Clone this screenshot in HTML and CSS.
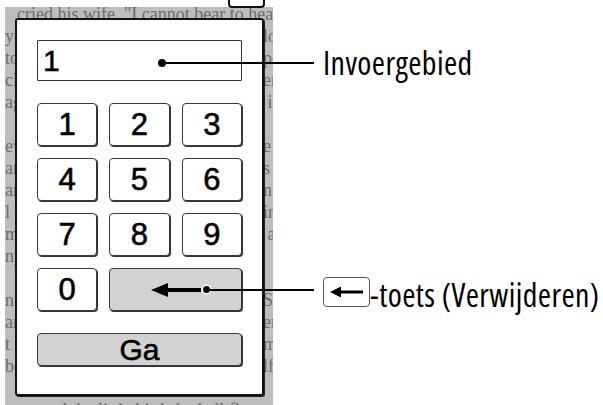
FILE: index.html
```html
<!DOCTYPE html>
<html>
<head>
<meta charset="utf-8">
<link rel="stylesheet" href="styles.css">
</head>
<body>
<div class="stage">
  <div class="page">
    <div class="ln first"><span>cried his wife. "I cannot bear to hear it any longer," she said.</span><span></span></div>
    <div class="ln"><span>you</span><span>look</span></div>
    <div class="ln"><span>to</span><span>poor</span></div>
    <div class="ln"><span>close</span><span>ere</span></div>
    <div class="ln"><span>again</span><span>&nbsp;it</span></div>
    <div class="ln"><span>&nbsp;</span><span></span></div>
    <div class="ln"><span>ever</span><span>e</span></div>
    <div class="ln"><span>are</span><span>s</span></div>
    <div class="ln"><span>and</span><span>n,</span></div>
    <div class="ln"><span>l</span><span>in</span></div>
    <div class="ln"><span>me</span><span>&nbsp;a</span></div>
    <div class="ln"><span>ny</span><span></span></div>
    <div class="ln"><span>&nbsp;</span><span></span></div>
    <div class="ln"><span>n read</span><span>Se</span></div>
    <div class="ln"><span>are</span><span>ere</span></div>
    <div class="ln"><span>t is</span><span>m</span></div>
    <div class="ln"><span>be</span><span>lf</span></div>
    <div class="ln"><span>&nbsp;</span><span></span></div>
    <div class="ln"><span>&nbsp;&nbsp;&nbsp;&nbsp;&nbsp;&nbsp;&nbsp;&nbsp;and the little birds had all flown</span><span></span></div>
  </div>

  <div class="tab"></div>

  <div class="dialog">
    <div class="field">1</div>
    <div class="keys">
      <div class="key">1</div>
      <div class="key">2</div>
      <div class="key">3</div>
      <div class="key">4</div>
      <div class="key">5</div>
      <div class="key">6</div>
      <div class="key">7</div>
      <div class="key">8</div>
      <div class="key">9</div>
      <div class="key">0</div>
      <div class="key gray wide">
        <svg width="50" height="16" viewBox="0 0 50 16"><polygon points="0,8 17,1 17,15" fill="#000"/><rect x="15" y="6" width="35" height="4" fill="#000"/></svg>
      </div>
      <div class="key gray full ga">Ga</div>
    </div>
  </div>

  <div class="callout c1"><span class="dot"></span><span class="line"></span></div>
  <div class="callout c2"><span class="dot halo"></span><span class="line"></span></div>

  <div class="label l1">Invoergebied</div>
  <div class="label l2">
    <span class="keyicon"><svg width="33" height="12" viewBox="0 0 33 12"><polygon points="0,6 11,0.5 11,11.5" fill="#000"/><rect x="10" y="4.5" width="23" height="3" fill="#000"/></svg></span><span class="ltext">-toets (Verwijderen)</span>
  </div>
</div>
</body>
</html>
```

FILE: styles.css
```css
html, body {
  margin: 0;
  padding: 0;
  background: #fff;
}
.stage {
  position: relative;
  width: 603px;
  height: 405px;
  overflow: hidden;
}
.page {
  margin: 7px 0 0 5px;
  width: 268px;
  height: 398px;
  background: #bdbdbd;
  overflow: hidden;
  font-family: "Liberation Serif", serif;
  font-size: 18px;
  line-height: 22px;
  color: #6c6c6c;
}
.ln {
  display: grid;
  grid-template-columns: 258px 60px;
  white-space: nowrap;
  height: 22px;
}
.ln span {
  overflow: hidden;
}
.ln.first {
  margin-top: -4px;
  padding-left: 12px;
  grid-template-columns: 400px 0;
}
.tab {
  position: absolute;
  left: 228px;
  top: -10px;
  width: 37px;
  height: 18px;
  box-sizing: border-box;
  background: #fff;
  border: 2px solid #111;
  border-radius: 0 0 4px 4px;
}
.dialog {
  position: absolute;
  left: 15px;
  top: 18px;
  width: 249px;
  height: 378px;
  box-sizing: border-box;
  background: #fff;
  border: 2px solid #111;
  border-radius: 3px;
  box-shadow: 1px 1px 0 #222;
  padding: 20px;
  font-family: "Liberation Sans", Arial, sans-serif;
}
.field {
  box-sizing: border-box;
  height: 41px;
  border: 1px solid #333;
  border-radius: 1px;
  padding-left: 5px;
  font-size: 30px;
  line-height: 39px;
  color: #000;
  margin-bottom: 22px;
  -webkit-text-stroke: 0.5px #000;
}
.keys {
  display: grid;
  grid-template-columns: repeat(3, 1fr);
  grid-auto-rows: 43px;
  gap: 12px;
}
.key {
  box-sizing: border-box;
  border: 1px solid #3a3a3a;
  border-radius: 4px;
  box-shadow: 1px 1px 0 #333;
  background: #fff;
  display: flex;
  align-items: center;
  justify-content: center;
  font-size: 31px;
  color: #000;
  -webkit-text-stroke: 0.6px #000;
}
.key.gray {
  background: #d2d2d2;
}
.key.wide {
  grid-column: span 2;
}
.key.full {
  grid-column: span 3;
  margin-top: 10px;
}
.ga {
  font-size: 30px;
}
.callout {
  position: absolute;
  display: flex;
  align-items: center;
}
.c1 {
  left: 158px;
  top: 59px;
}
.c2 {
  left: 203px;
  top: 286px;
}
.dot {
  width: 8px;
  height: 8px;
  border-radius: 50%;
  background: #000;
  flex: none;
}
.dot.halo {
  width: 7px;
  height: 7px;
  box-shadow: 0 0 0 1.5px #fff;
}
.line {
  height: 2px;
  background: #000;
  margin-left: -2px;
}
.c1 .line {
  width: 150px;
}
.c2 .line {
  width: 106px;
}
.label {
  position: absolute;
  left: 323px;
  font-family: "Open Sans", sans-serif;
  font-stretch: 75%;
  font-weight: 500;
  font-size: 32px;
  letter-spacing: 0.4px;
  line-height: 31px;
  color: #000;
  white-space: nowrap;
}
.l1 {
  top: 47px;
}
.l2 {
  top: 277px;
  display: flex;
  align-items: flex-start;
}
.keyicon {
  box-sizing: border-box;
  width: 47px;
  height: 30px;
  border: 1px solid #555;
  border-radius: 4px;
  display: flex;
  align-items: center;
  justify-content: center;
}
.ltext {
  margin-top: 2px;
}
```
